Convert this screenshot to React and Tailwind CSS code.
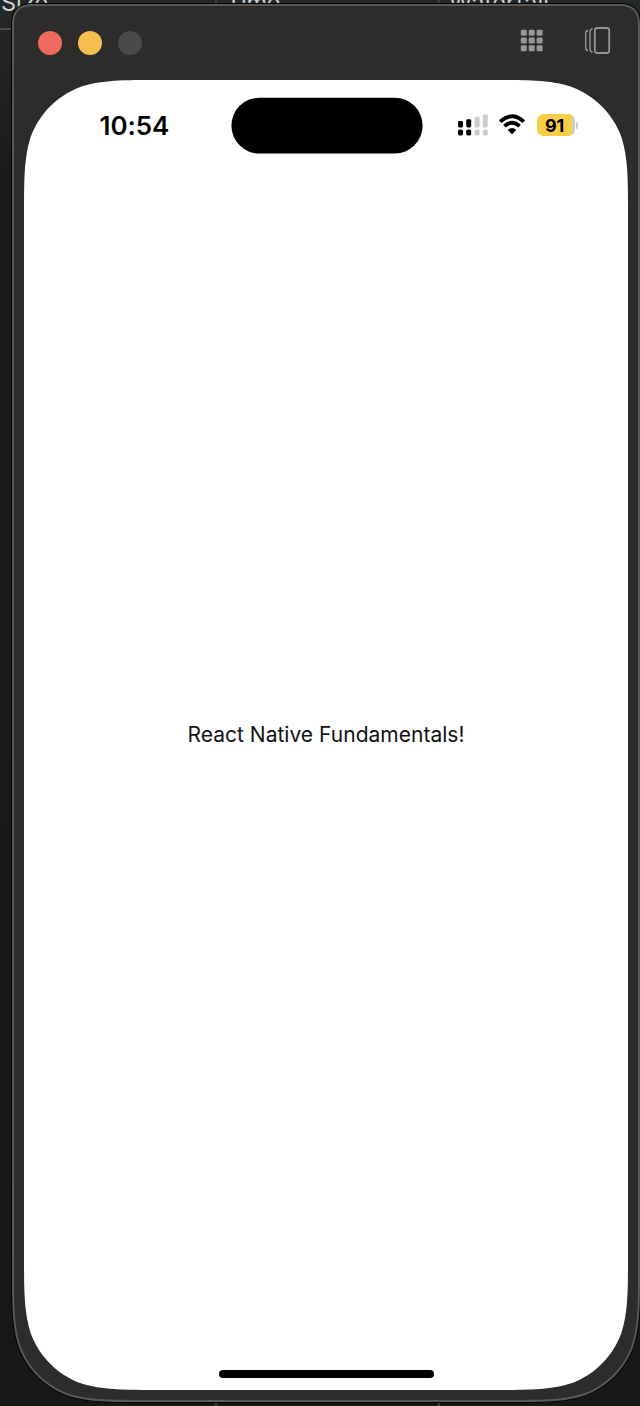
const dots = [0, 1, 2, 3, 4, 5, 6, 7, 8];

function TableBackdrop() {
  return (
    <div className="h-full w-full bg-gradient-to-b from-[#24282a] via-[#1b1b1b] via-12% to-[#171717]">
      <div className="flex h-full">
        <div className="w-[217px] border-r-2 border-[#3c3f41]">
          <div className="h-[30px] border-b-2 border-[#4a4d4e] pl-px">
            <span className="relative -top-3 block text-[23.5px] leading-[30px] text-[#d0d0d0]">Size</span>
          </div>
        </div>
        <div className="w-[223px] border-r-2 border-[#3c3f41] pl-[9px]">
          <span className="relative -top-3 block text-[23.5px] leading-[30px] tracking-[-0.2px] text-[#d0d0d0]">Time</span>
        </div>
        <div className="pl-[9px]">
          <span className="relative -top-3 block text-[23.5px] leading-[30px] tracking-[0.2px] text-[#d0d0d0]">Waterfall</span>
        </div>
      </div>
    </div>
  );
}

function TitleBar() {
  return (
    <header className="flex h-[74px] items-start justify-between pr-[27px] pl-6">
      <div className="flex gap-4 pt-[25px]">
        <span className="size-6 rounded-full bg-[#ee6a5f]" />
        <span className="size-6 rounded-full bg-[#f5bf4f]" />
        <span className="size-6 rounded-full bg-[#4b4a48]" />
      </div>
      <div className="flex gap-10 pt-5">
        <svg width="24" height="28" viewBox="0 0 24 28" fill="#979696">
          {dots.map((i) => (
            <rect key={i} x={0.8 + (i % 3) * 7.9} y={3.7 + Math.floor(i / 3) * 7.8} width="6" height="6" rx="1.2" />
          ))}
        </svg>
        <svg width="27" height="28" viewBox="0 0 27 28" fill="none" stroke="#979696">
          <rect x="10.8" y="2" width="14.4" height="25" rx="2.5" strokeWidth="1.8" />
          <path d="M8.6 2.8Q6 3.3 6 6V23Q6 25.7 8.6 26.2" strokeWidth="1.4" />
          <path d="M4 4.5Q1.7 4.8 1.7 7.3V21.7Q1.7 24.2 4 24.5" strokeWidth="1.4" />
        </svg>
      </div>
    </header>
  );
}

function StatusBar() {
  return (
    <div className="flex h-[92px] items-start">
      <div className="w-[206.5px] pt-[30.5px] pl-[75.5px] text-[26px] leading-[30px] font-semibold tracking-[-0.1px] text-black">
        10:54
      </div>
      <svg className="mt-[17px]" width="192" height="57" viewBox="0 0 192 57">
        <rect x="0.4" y="0.7" width="191.2" height="55.8" rx="27.9" fill="#000" />
      </svg>
      <svg className="mt-[30px] ml-[34.5px]" width="32" height="30" viewBox="0 0 32 30">
        <g fill="#000">
          <rect x="1" y="11" width="5" height="6.5" rx="1.4" />
          <rect x="9.2" y="9.2" width="5" height="8.3" rx="1.4" />
          <rect x="1" y="19.6" width="5" height="5.8" rx="1.6" />
          <rect x="9.2" y="19.6" width="5" height="5.8" rx="1.6" />
        </g>
        <g fill="#cccccc">
          <rect x="17.6" y="6.7" width="5" height="10.8" rx="1.4" />
          <rect x="25.8" y="4.4" width="5" height="13.1" rx="1.4" />
          <rect x="17.6" y="19.6" width="5" height="5.8" rx="1.6" />
          <rect x="25.8" y="19.6" width="5" height="5.8" rx="1.6" />
        </g>
      </svg>
      <svg className="mt-[34px] ml-[10px]" width="26" height="21" viewBox="0 0 26 21" fill="none" stroke="#000">
        <path d="M1.2 7.7Q13 -3.1 24.8 7.7" strokeWidth="3.7" />
        <path d="M5.4 12.2Q13 5.4 20.6 12.2" strokeWidth="3.7" />
        <path d="M13 20.2L8.7 16Q13 12.2 17.3 16Z" fill="#000" stroke="none" />
      </svg>
      <div className="mt-[34px] ml-[11.5px] flex items-center gap-px">
        <div className="flex h-[22px] w-[38px] items-center justify-center overflow-hidden rounded-[6.5px] bg-[linear-gradient(to_right,#f7ce45_35px,#cccccc_35px)] pr-0.5 text-[18px] font-bold tracking-[-0.3px] text-black">
          91
        </div>
        <span className="h-[7px] w-[2.5px] rounded-r-full bg-[#cccccc]" />
      </div>
    </div>
  );
}

function PhoneScreen() {
  return (
    <main className="ml-[10px] flex h-[1310px] w-[604px] flex-col bg-white [clip-path:path('M137.6_0H466.4C506_0_525.8_0_547.2_6.7C570.4_15.2_588.8_33.6_597.3_56.8C604_78.2_604_98_604_137.6V1172.4C604_1212_604_1231.8_597.3_1253.2C588.8_1276.4_570.4_1294.8_547.2_1303.3C525.8_1310_506_1310_466.4_1310H137.6C98_1310_78.2_1310_56.8_1303.3C33.6_1294.8_15.2_1276.4_6.7_1253.2C0_1231.8_0_1212_0_1172.4V137.6C0_98_0_78.2_6.7_56.8C15.2_33.6_33.6_15.2_56.8_6.7C78.2_0_98_0_137.6_0Z')]">
      <StatusBar />
      <div className="flex flex-1 items-center justify-center pb-[72px]">
        <p className="text-[21px] leading-7 tracking-[0.02px] whitespace-nowrap text-[#111]">
          React Native Fundamentals!
        </p>
      </div>
      <div className="flex h-5 justify-center">
        <span className="ml-px h-2 w-[215px] rounded-full bg-black" />
      </div>
    </main>
  );
}

export default function App() {
  return (
    <div className="relative h-[1406px] w-[640px] overflow-hidden bg-[#181818] font-['Inter',sans-serif]">
      <TableBackdrop />
      <div className="absolute top-[3px] left-[11px] h-[1400px] w-[630px] bg-black p-px [clip-path:path('M21_0H609Q630_0_630_21V1264C630_1303_630_1322.7_623.3_1343.8C615_1366.8_596.8_1385_573.8_1393.3C552.7_1400_533_1400_494_1400H136C97_1400_77.3_1400_56.2_1393.3C33.2_1385_15_1366.8_6.7_1343.8C0_1322.7_0_1303_0_1264V21Q0_0_21_0Z')]">
        <div className="h-[1398px] w-[628px] bg-[#595958] p-0.5 [clip-path:path('M20_0H608Q628_0_628_20V1263.5C628_1302.2_628_1321.6_621.4_1342.4C613.1_1365.2_595.2_1383.1_572.4_1391.4C551.6_1398_532.2_1398_493.5_1398H134.5C95.8_1398_76.4_1398_55.6_1391.4C32.8_1383.1_14.9_1365.2_6.6_1342.4C0_1321.6_0_1302.2_0_1263.5V20Q0_0_20_0Z')]">
          <div className="flex h-[1394px] w-[624px] flex-col bg-[#2e2c2b] [clip-path:path('M18_0H606Q624_0_624_18V1262.5C624_1300.4_624_1319.3_617.6_1339.7C609.5_1361.9_591.9_1379.5_569.7_1387.6C549.3_1394_530.4_1394_492.5_1394H131.5C93.6_1394_74.7_1394_54.3_1387.6C32.1_1379.5_14.5_1361.9_6.4_1339.7C0_1319.3_0_1300.4_0_1262.5V18Q0_0_18_0Z')]">
            <TitleBar />
            <PhoneScreen />
          </div>
        </div>
      </div>
    </div>
  );
}
